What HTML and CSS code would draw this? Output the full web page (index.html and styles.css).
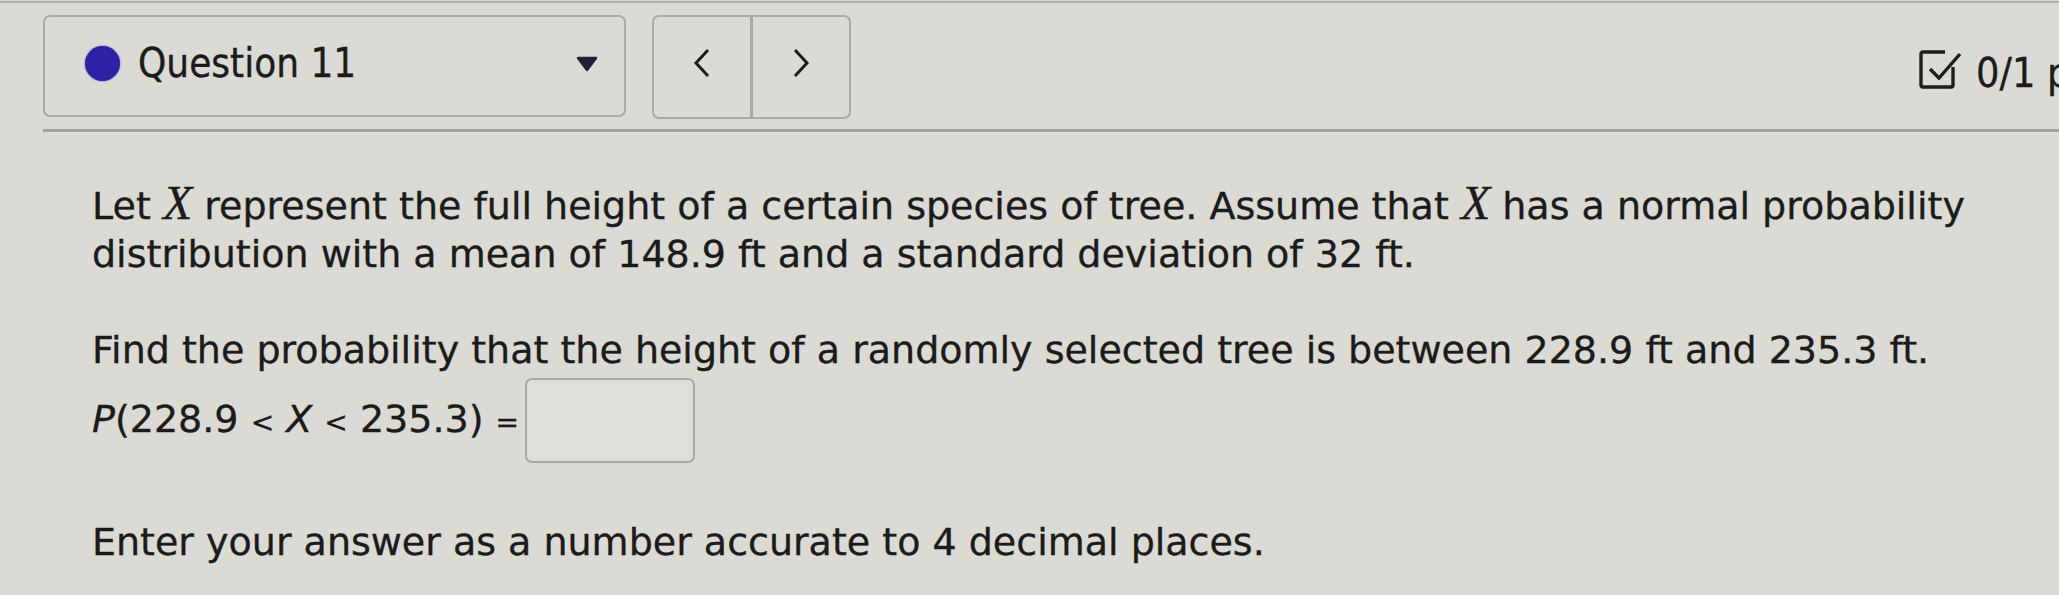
FILE: index.html
```html
<!DOCTYPE html>
<html>
<head>
<meta charset="utf-8">
<link rel="stylesheet" href="styles.css">
</head>
<body>
<div class="topline"></div>
<div class="header">
  <div class="dropdown">
    <span class="dot"></span>
    <span class="qtitle">Question 11</span>
    <svg class="caret" width="22" height="16" viewBox="0 0 22 16"><path d="M2 2 L20 2 L11 14 Z" fill="#24203a" stroke="#24203a" stroke-width="2.5" stroke-linejoin="round"/></svg>
  </div>
  <div class="nav">
    <div class="navbtn"><svg width="18" height="30" viewBox="0 0 18 30"><polyline points="15,2 3,15 15,28" fill="none" stroke="#1d1d1d" stroke-width="3"/></svg></div>
    <div class="navbtn"><svg width="18" height="30" viewBox="0 0 18 30"><polyline points="3,2 15,15 3,28" fill="none" stroke="#1d1d1d" stroke-width="3"/></svg></div>
  </div>
  <div class="score">
    <svg class="check" width="44" height="40" viewBox="0 0 44 40"><path d="M26 2 H4 Q2 2 2 4 V35 Q2 37 4 37 H32 Q34 37 34 35 V17" fill="none" stroke="#1d1d1d" stroke-width="3.4"/><polyline points="11,19 20,28 41,4" fill="none" stroke="#1d1d1d" stroke-width="3.4"/></svg>
    <span class="pts">0/1 pt</span>
  </div>
</div>
<div class="content">
  <p class="para">Let <span class="mx">X</span> represent the full height of a certain species of tree. Assume that <span class="mx">X</span> has a normal probability<br>distribution with a mean of 148.9 ft and a standard deviation of 32 ft.</p>
  <p class="para find">Find the probability that the height of a randomly selected tree is between 228.9 ft and 235.3 ft.</p>
  <div class="answer-row">
    <span class="expr"><i>P</i>(228.9 <span class="op">&lt;</span> <i>X</i> <span class="op">&lt;</span> 235.3) <span class="op">=</span></span>
    <span class="answer-box"></span>
  </div>
  <p class="para note">Enter your answer as a number accurate to 4 decimal places.</p>
</div>
</body>
</html>
```
FILE: styles.css
```css
html, body {
  margin: 0;
  padding: 0;
}
body {
  background: #dbdad4;
  color: #1b1b1b;
  font-family: "DejaVu Sans", sans-serif;
  overflow: hidden;
  width: 2059px;
  height: 595px;
  -webkit-text-stroke: 0.35px currentColor;
}
.topline {
  height: 2px;
  margin-top: 1px;
  background: #b3b2ad;
}
.header {
  display: flex;
  align-items: flex-start;
  margin-left: 43px;
  height: 129px;
  border-bottom: 3px solid #a3a29d;
  box-sizing: border-box;
  padding-top: 12px;
}
.dropdown {
  width: 583px;
  height: 102px;
  box-sizing: border-box;
  border: 2px solid #aaa9a4;
  border-radius: 7px;
  display: flex;
  align-items: center;
  padding-left: 40px;
  padding-right: 26px;
  flex: none;
}
.dot {
  width: 35px;
  height: 35px;
  border-radius: 50%;
  background: #2d21a6;
  box-shadow: 0 0 2px #5a50c0;
  margin-top: -6px;
  flex: none;
}
.qtitle {
  font-family: "DejaVu Sans Condensed", "DejaVu Sans", sans-serif;
  font-stretch: condensed;
  font-size: 40px;
  margin-left: 18px;
  margin-top: -6px;
}
.caret {
  margin-left: auto;
  margin-top: -4px;
}
.nav {
  margin-left: 26px;
  width: 199px;
  height: 104px;
  box-sizing: border-box;
  border: 2px solid #aaa9a4;
  border-radius: 7px;
  display: flex;
  flex: none;
}
.navbtn {
  flex: 1;
  display: flex;
  align-items: center;
  justify-content: center;
  padding-bottom: 8px;
}
.navbtn + .navbtn {
  border-left: 3px solid #a9a8a3;
}
.score {
  margin-left: auto;
  width: 140px;
  flex: none;
  display: flex;
  align-items: flex-start;
  margin-top: 35px;
}
.check {
  flex: none;
}
.pts {
  font-family: "DejaVu Sans Condensed", "DejaVu Sans", sans-serif;
  font-stretch: condensed;
  font-size: 41px;
  line-height: 48px;
  margin-left: 13px;
  margin-top: -1px;
  white-space: nowrap;
}
.content {
  padding-left: 92px;
  padding-top: 50px;
}
.para {
  margin: 0;
  font-size: 38px;
  line-height: 48px;
}
.mx {
  font-family: "Liberation Serif", "DejaVu Serif", serif;
  font-style: italic;
  font-size: 48px;
  line-height: 0;
}
.find {
  margin-top: 48px;
}
.answer-row {
  display: flex;
  align-items: center;
  margin-top: 4px;
  font-size: 38px;
  line-height: 48px;
}
.op {
  font-size: 28px;
}
.answer-box {
  width: 170px;
  height: 85px;
  box-sizing: border-box;
  border: 2px solid #a9a8a3;
  border-radius: 7px;
  background: #dfded8;
  margin-left: 6px;
}
.note {
  margin-top: 55px;
}
```
